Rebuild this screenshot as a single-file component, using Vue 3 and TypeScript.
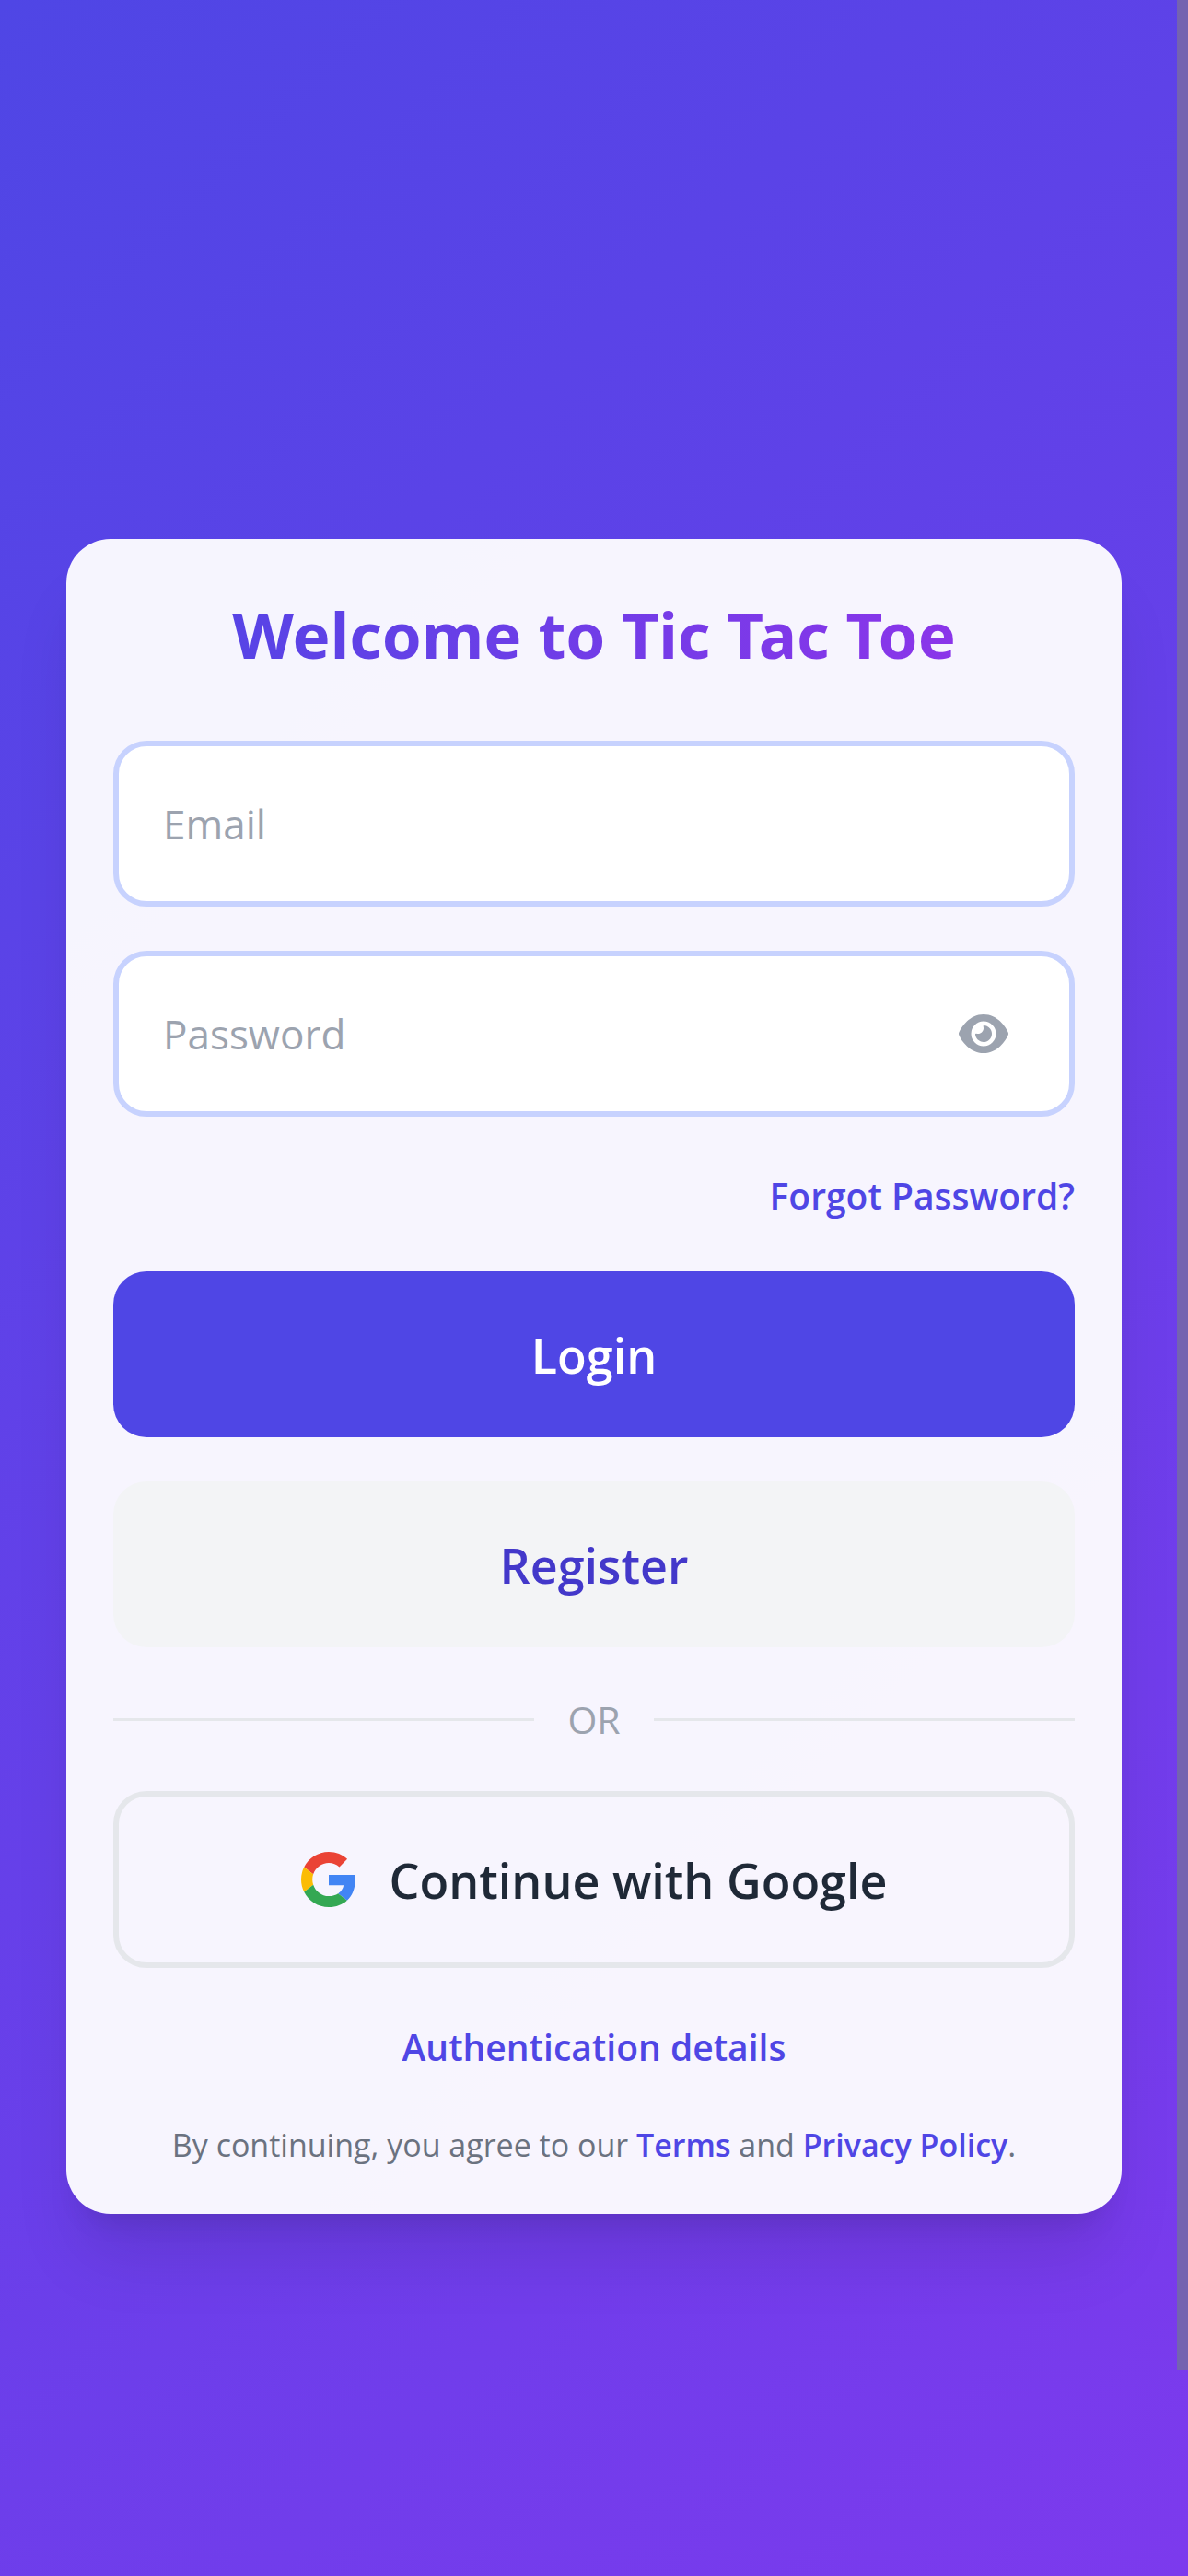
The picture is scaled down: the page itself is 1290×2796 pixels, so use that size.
<script setup lang="ts">
import { ref } from 'vue'

const email = ref('')
const password = ref('')
const showPassword = ref(false)
</script>

<template>
  <main class="page">
    <section class="card">
      <h1 class="title">Welcome to Tic Tac Toe</h1>

      <form class="form" @submit.prevent>
        <input v-model="email" class="field" type="email" placeholder="Email" aria-label="Email" />

        <div class="password">
          <input
            v-model="password"
            class="field"
            :type="showPassword ? 'text' : 'password'"
            placeholder="Password"
            aria-label="Password"
          />
          <button
            class="toggle"
            type="button"
            aria-label="Show password"
            @click="showPassword = !showPassword"
          >
            <svg class="eye" viewBox="0 0 576 512" aria-hidden="true">
              <path
                fill="currentColor"
                d="M288 32c-80.800 0-145.500 36.800-192.600 80.600C48.600 156 17.300 208 2.500 243.700c-3.300 7.900-3.300 16.700 0 24.600C17.300 304 48.600 356 95.400 399.400C142.500 443.200 207.200 480 288 480s145.500-36.800 192.600-80.600c46.800-43.500 78.100-95.400 93-131.100c3.300-7.900 3.300-16.700 0-24.600c-14.900-35.700-46.200-87.700-93-131.100C433.500 68.800 368.800 32 288 32zM144 256a144 144 0 1 1 288 0 144 144 0 1 1 -288 0zm144-64c0 35.300-28.700 64-64 64c-7.100 0-13.900-1.200-20.300-3.300c-5.500-1.800-11.900 1.600-11.700 7.400c.3 6.900 1.300 13.800 3.200 20.700c13.700 51.200 66.400 81.600 117.600 67.900s81.600-66.400 67.900-117.600c-11.100-41.500-47.800-69.400-88.600-71.100c-5.800-.2-9.200 6.100-7.400 11.700c2.100 6.400 3.300 13.200 3.300 20.300z"
              />
            </svg>
          </button>
        </div>

        <a class="link forgot" href="#forgot">Forgot Password?</a>
        <button class="btn primary" type="submit">Login</button>
        <button class="btn secondary" type="button">Register</button>
      </form>

      <div class="divider"><span>OR</span></div>

      <button class="btn google" type="button">
        <svg class="logo" viewBox="0 0 48 48" aria-hidden="true">
          <path fill="#ea4335" d="M24 9.500c3.540 0 6.710 1.220 9.210 3.600l6.850-6.850C35.900 2.380 30.470 0 24 0 14.620 0 6.510 5.380 2.560 13.220l7.980 6.190C12.430 13.720 17.740 9.500 24 9.500z" />
          <path fill="#4285f4" d="M46.980 24.550c0-1.570-.15-3.090-.38-4.550H24v9.020h12.940c-.58 2.960-2.260 5.480-4.780 7.180l7.730 6c4.510-4.180 7.090-10.360 7.090-17.650z" />
          <path fill="#fbbc05" d="M10.530 28.590c-.48-1.450-.76-2.990-.76-4.590s.27-3.140.76-4.590l-7.980-6.190C.92 16.460 0 20.120 0 24c0 3.880.92 7.540 2.560 10.780l7.970-6.190z" />
          <path fill="#34a853" d="M24 48c6.480 0 11.930-2.130 15.890-5.810l-7.730-6c-2.150 1.450-4.920 2.300-8.160 2.300-6.260 0-11.570-4.220-13.470-9.910l-7.980 6.190C6.510 42.620 14.620 48 24 48z" />
        </svg>
        <span>Continue with Google</span>
      </button>

      <a class="link details" href="#details">Authentication details</a>

      <p class="legal">
        By continuing, you agree to our <a class="link" href="#terms">Terms</a> and
        <a class="link" href="#privacy">Privacy Policy</a>.
      </p>
    </section>
    <div class="scrollbar" aria-hidden="true"></div>
  </main>
</template>

<style>
body {
  margin: 0;
}
</style>

<style scoped>
.page {
  position: relative;
  box-sizing: border-box;
  min-height: 100vh;
  padding: 192px 72px 0;
  display: flex;
  align-items: center;
  justify-content: center;
  background: linear-gradient(135deg, #4f46e5, #7c3aed);
  font-family: 'Segoe UI', 'Open Sans', sans-serif;
}
.card {
  box-sizing: border-box;
  width: 100%;
  max-width: 1344px;
  padding: 51px;
  display: flex;
  flex-direction: column;
  gap: 48px;
  border-radius: 48px;
  background: rgba(255, 255, 255, 0.95);
  box-shadow:
    0 60px 75px -15px rgba(0, 0, 0, 0.1),
    0 24px 30px -18px rgba(0, 0, 0, 0.1);
}
.title {
  margin: 0 0 20px;
  padding-top: 4px;
  font-family: 'Segoe UI', 'Noto Sans', sans-serif;
  font-size: 69px;
  line-height: 96px;
  font-weight: 700;
  text-align: center;
  color: transparent;
  background: linear-gradient(90deg, #4f46e5, #9333ea);
  background-clip: text;
}
.form {
  display: flex;
  flex-direction: column;
  gap: 48px;
}
.field {
  box-sizing: border-box;
  display: block;
  width: 100%;
  height: 180px;
  padding: 0 48px;
  border: 6px solid #c7d2fe;
  border-radius: 36px;
  background: #fff;
  color: #1f2937;
  font: 400 44px 'Segoe UI', 'Open Sans', sans-serif;
}
.field::placeholder {
  color: #9ca3af;
  opacity: 1;
}
.password {
  position: relative;
}
.password .field {
  padding-right: 144px;
}
.toggle {
  position: absolute;
  top: 0;
  right: 48px;
  height: 100%;
  padding: 0 24px;
  display: flex;
  align-items: center;
  border: 0;
  background: none;
  color: #9ca3af;
}
.eye {
  width: 54px;
  height: 48px;
}
.link {
  color: #4f46e5;
  font-weight: 600;
  text-decoration: none;
}
.forgot,
.details {
  padding-top: 4px;
  font-size: 39px;
  line-height: 68px;
}
.forgot {
  align-self: flex-end;
}
.details {
  align-self: center;
}
.btn {
  box-sizing: border-box;
  width: 100%;
  height: 180px;
  padding: 0;
  border: 0;
  border-radius: 36px;
  font: 600 52px 'Segoe UI', 'Open Sans', sans-serif;
}
.primary {
  background: #4f46e5;
  color: #fff;
}
.secondary {
  background: #f3f4f6;
  color: #4338ca;
}
.google {
  height: 192px;
  display: flex;
  align-items: center;
  justify-content: center;
  gap: 36px;
  border: 6px solid #e5e7eb;
  background: transparent;
  color: #1f2937;
}
.logo {
  width: 60px;
  height: 60px;
}
.divider {
  display: flex;
  align-items: center;
  gap: 36px;
  font-size: 41px;
  line-height: 60px;
  color: #9ca3af;
}
.divider::before,
.divider::after {
  content: '';
  flex: 1;
  height: 3px;
  background: #e5e7eb;
}
.legal {
  margin: 0;
  font-size: 34px;
  line-height: 48px;
  text-align: center;
  color: #6b7280;
}
.scrollbar {
  position: absolute;
  top: 0;
  right: 0;
  width: 12px;
  height: 92%;
  background: #7463b0;
}
</style>
